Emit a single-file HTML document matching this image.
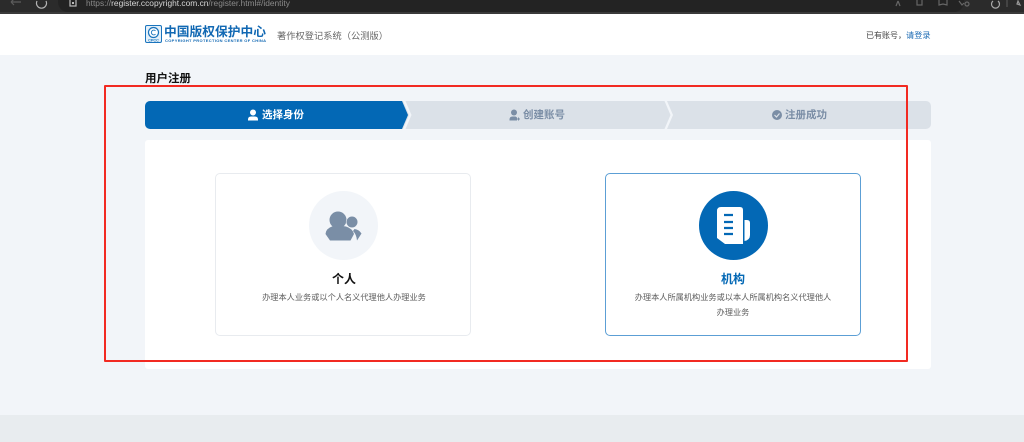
<!DOCTYPE html>
<html lang="zh"><head><meta charset="utf-8"><title>用户注册</title>
<style>
*{margin:0;padding:0;box-sizing:border-box}
html,body{width:1024px;height:442px;overflow:hidden;background:#f2f5f9;font-family:"Liberation Sans","Noto Sans CJK SC",sans-serif}
.a{position:absolute;white-space:nowrap}
.c{text-align:center}
</style></head><body>
<div class="a" style="left:0;top:0;width:1024px;height:14px;background:#3a3a3a"></div>
<div class="a" style="left:0;top:0;width:1024px;height:12px;background:#2b2b2b"></div>
<div class="a" style="left:58px;top:-14px;width:906px;height:26px;border-radius:10px;background:#232323"></div>
<svg class="a" style="left:0;top:0" width="1024" height="12" fill="none" stroke-width="1.2">
<path d="M11 2H21M11 2l3-3M11 2l3 3" stroke="#5c5c5c"/>
<path d="M46 1a5 5 0 1 1-9 0" stroke="#b5b5b5"/>
<rect x="70" y="-1" width="6" height="7" stroke="#bbb"/>
<rect x="72" y="2" width="2" height="2" fill="#bbb"/>
<g stroke="#666"><path d="M898 1l-2 5M898 1l2 5"/><rect x="917" y="-2" width="5" height="7"/><path d="M939 5l4-1 4 1V-1h-8z"/><path d="M959 1l3 4 2-2"/><circle cx="967" cy="4" r="2"/></g>
<path d="M993 1a4 4 0 1 0 5 0" stroke="#aaa"/>
<path d="M1007 0v7" stroke="#555"/>
<path d="M1018 1l2 4-3-1z" stroke="#999"/>
</svg>
<div class="a" style="left:86px;top:-4px;font-size:8.4px;line-height:14px;color:#8b8b8b">https://<span style="color:#d8d8d8">register.ccopyright.com.cn</span>/register.html#/identity</div>

<div class="a" style="left:0;top:14px;width:1024px;height:41px;background:#fff"></div>
<svg class="a" style="left:145px;top:25px" width="18" height="18"><rect x=".5" y=".5" width="16" height="17" rx="1.5" fill="#e4f0f9" stroke="#1a74bd"/><circle cx="8.500" cy="7.500" r="5" fill="#fff" stroke="#1a74bd" stroke-width="1.2"/><path d="M10.500 5.800a2.400 2.400 0 1 0 0 3.400" fill="none" stroke="#1a74bd"/><text x="8.500" y="16.500" font-size="3.800" font-weight="700" text-anchor="middle" fill="#1a74bd">CPCC</text></svg>
<div class="a" style="left:164px;top:23.500px;font-size:12.750px;line-height:15px;font-weight:700;color:#1168b3">中国版权保护中心</div>
<div class="a" style="left:165px;top:38.500px;font-size:4px;line-height:4px;font-weight:700;color:#1168b3;letter-spacing:.34px">COPYRIGHT PROTECTION CENTER OF CHINA</div>
<div class="a" style="left:277px;top:28.500px;font-size:9.250px;line-height:14px;color:#666">著作权登记系统（公测版）</div>
<div class="a" style="left:866px;top:30px;font-size:8px;line-height:12px;color:#444">已有账号，<span style="color:#1f6db5;font-size:8.200px">请登录</span></div>

<div class="a" style="left:145px;top:71.500px;font-size:11.500px;line-height:15px;font-weight:700;color:#111">用户注册</div>

<div class="a" style="left:145px;top:101px;width:786px;height:28px;border-radius:5px;background:#dbe1e8"></div>
<svg class="a" style="left:145px;top:101px" width="786" height="28">
<path d="M5 0H257L263 14L257 28H5a5 5 0 0 1-5-5V5a5 5 0 0 1 5-5z" fill="#0368b5"/>
<path d="M258 0l6 14-6 14h2.500l6-14-6-14z" fill="#f2f5f9"/>
<path d="M519.500 0l6 14-6 14h2.500l6-14-6-14z" fill="#f2f5f9"/>
<circle cx="108" cy="11.500" r="3" fill="#fff"/><path d="M103 19.500v-1q0-3 3-3h4q3 0 3 3v1z" fill="#fff"/>
<circle cx="369" cy="11.500" r="3" fill="#7b8ea6"/><path d="M364.500 19.500v-1q0-3 3-3h3l1.500 1v3z" fill="#7b8ea6"/><path d="M372 18h3M373.500 16.500v3" stroke="#7b8ea6"/>
<circle cx="632" cy="14" r="5" fill="#7b8ea6"/><path d="M629.500 14l2 2 3-3.500" fill="none" stroke="#dbe1e8" stroke-width="1.200"/>
</svg>
<div class="a" style="left:262px;top:108px;font-size:10.500px;line-height:15px;font-weight:700;color:#fff">选择身份</div>
<div class="a" style="left:523px;top:108px;font-size:10.500px;line-height:15px;font-weight:700;color:#7b8ea6">创建账号</div>
<div class="a" style="left:785px;top:108px;font-size:10.500px;line-height:15px;font-weight:700;color:#7b8ea6">注册成功</div>

<div class="a" style="left:145px;top:140px;width:786px;height:229px;border-radius:3px;background:#fff"></div>

<div class="a" style="left:215px;top:173px;width:256px;height:163px;border:1px solid #e8ebef;border-radius:5px;background:#fff"></div>
<svg class="a" style="left:309px;top:191px" width="70" height="70">
<circle cx="34.500" cy="34.500" r="34.500" fill="#f2f5f9"/>
<g fill="#7a8ea6"><circle cx="29" cy="29" r="8.500"/><circle cx="43" cy="31" r="5.800" stroke="#f2f5f9" stroke-width=".6"/>
<path d="M21 49.500L16.500 43Q17 37.500 23 35.500Q30 34 37 35.500Q43.500 37.500 45 43L41.500 49.500Z"/>
<path d="M45.500 38Q50 38.500 52.500 42.500L48 49.500Q47.500 43.500 44 40Z"/></g>
</svg>
<div class="a c" style="left:215px;top:271px;width:258px;font-size:12px;line-height:17px;font-weight:700;color:#111">个人</div>
<div class="a c" style="left:215px;top:290px;width:258px;font-size:8.200px;line-height:15px;color:#5c5c5c">办理本人业务或以个人名义代理他人办理业务</div>

<div class="a" style="left:605px;top:173px;width:256px;height:163px;border:1px solid #5c9fd5;border-radius:5px;background:#fff"></div>
<svg class="a" style="left:699px;top:191px" width="70" height="70">
<circle cx="34.500" cy="34.500" r="34.500" fill="#0368b5"/>
<path d="M22 16H41q3 0 3 3V53H26L18 47V20q0-4 4-4z" fill="#fff"/>
<path d="M45.500 29h2.500q3 0 3 3V44q0 5-5.500 6z" fill="#fff"/>
<path d="M25 24h9M25 31h9M25 37h9M25 43h9" stroke="#0368b5" stroke-width="2.200"/>
</svg>
<div class="a c" style="left:605px;top:271px;width:256px;font-size:12px;line-height:17px;font-weight:700;color:#0368b5">机构</div>
<div class="a c" style="left:605px;top:290px;width:256px;font-size:8.200px;line-height:15px;color:#5c5c5c">办理本人所属机构业务或以本人所属机构名义代理他人</div>
<div class="a c" style="left:605px;top:305px;width:256px;font-size:8.200px;line-height:15px;color:#5c5c5c">办理业务</div>

<div class="a" style="left:0;top:415px;width:1024px;height:27px;background:#e8ecef"></div>
<div class="a" style="left:104px;top:85px;width:804px;height:277px;border:2px solid #f22a22;border-radius:1px"></div>
</body></html>
